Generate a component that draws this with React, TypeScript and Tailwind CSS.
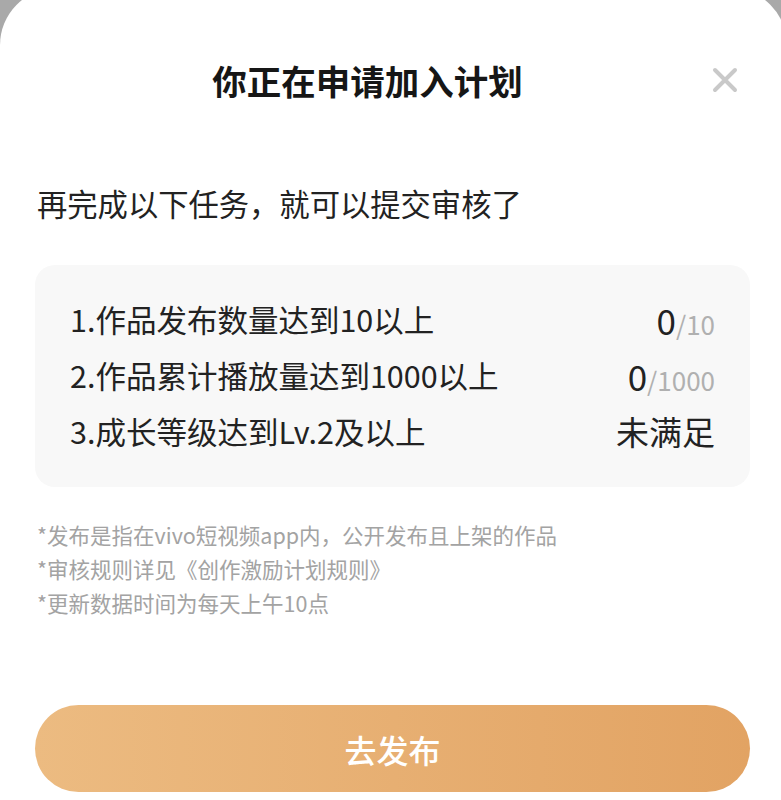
import React from "react";

const font = {
  fontFamily: '"Noto Sans CJK SC", "Noto Sans", sans-serif',
};

export default function App() {
  const rows = [
    { label: "1.作品发布数量达到10以上", main: "0", sub: "/10" },
    { label: "2.作品累计播放量达到1000以上", main: "0", sub: "/1000" },
    { label: "3.成长等级达到Lv.2及以上", main: "未满足", sub: "" },
  ];
  const notes = [
    "*发布是指在vivo短视频app内，公开发布且上架的作品",
    "*审核规则详见《创作激励计划规则》",
    "*更新数据时间为每天上午10点",
  ];
  return (
    <div className="w-[781px] h-[800px] overflow-hidden bg-[#a9a9a9]" style={font}>
      <div className="mt-[-12px] mr-[-6px] h-[812px] rounded-t-[57px] bg-white flex flex-col">
        <div className="mt-[70px] h-[44px] flex items-center pl-[35px] pr-[37px]">
          <div className="flex-1 text-center text-[34.5px] leading-[44px] font-bold text-[#161616]">
            你正在申请加入计划
          </div>
          <div className="w-[50px] flex justify-center items-center">
            <svg width="26" height="26" viewBox="0 0 26 26">
              <path d="M3 3 L23 23 M23 3 L3 23" stroke="#c9c9c9" strokeWidth="4" strokeLinecap="round" />
            </svg>
          </div>
        </div>
        <div className="mt-[80px] pl-[37px] text-[30.3px] leading-[42px] text-[#222]">
          再完成以下任务，就可以提交审核了
        </div>
        <div className="mt-[41px] ml-[35px] mr-[37px] h-[222px] rounded-[20px] bg-[#f8f8f8] pt-[27px] pl-[35px] pr-[35px] flex flex-col">
          {rows.map((r) => (
            <div key={r.label} className="h-[56px] flex items-center justify-between text-[#222]">
              <span className="text-[30.5px]">{r.label}</span>
              <span className="flex items-baseline">
                <span className={r.sub ? "text-[35px]" : "text-[33px]"}>{r.main}</span>
                {r.sub && <span className="text-[26px] text-[#b0b0b0]">{r.sub}</span>}
              </span>
            </div>
          ))}
        </div>
        <div className="mt-[31px] pl-[37px] flex flex-col text-[21.5px] leading-[34px] text-[#a3a3a3]">
          {notes.map((n) => (
            <div key={n}>{n}</div>
          ))}
        </div>
        <div className="mt-[85px] ml-[35px] mr-[37px] h-[87px] rounded-full bg-gradient-to-r from-[#ecbb81] to-[#e2a363] flex items-center justify-center">
          <span className="text-[32px] font-medium text-white">去发布</span>
        </div>
      </div>
    </div>
  );
}
